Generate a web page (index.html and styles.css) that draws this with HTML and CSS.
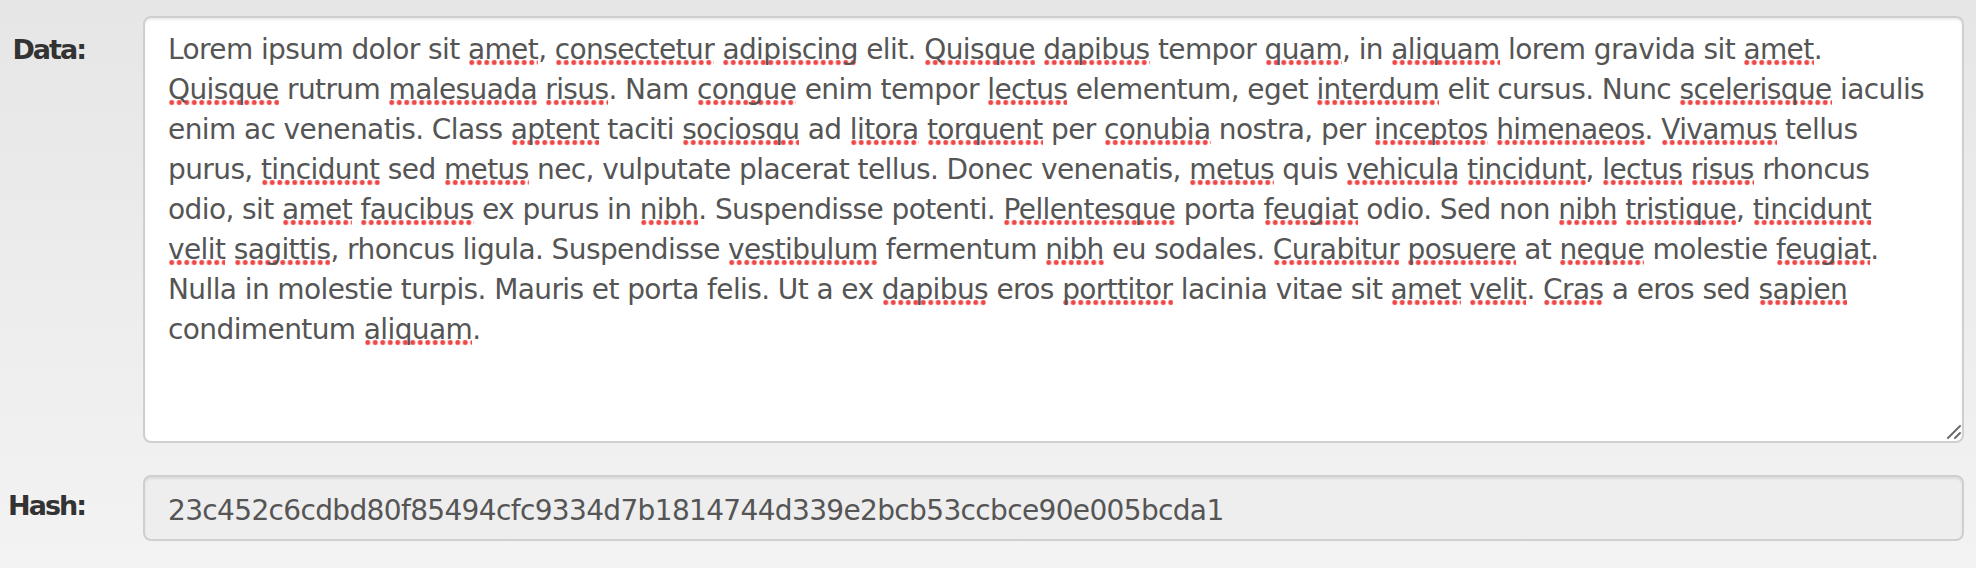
FILE: index.html
```html
<!DOCTYPE html>
<html lang="la">
<head>
<meta charset="utf-8">
<title>Hash</title>
<link rel="stylesheet" href="styles.css">
</head>
<body>
<form class="form">
  <div class="row row-data">
    <label class="label label-data">Data:</label>
    <div class="textarea">
      <div class="text">Lorem ipsum dolor sit <span class="sp">amet</span>, <span class="sp">consectetur</span> <span class="sp">adipiscing</span> elit. <span class="sp">Quisque</span> <span class="sp">dapibus</span> tempor <span class="sp">quam</span>, in <span class="sp">aliquam</span> lorem gravida sit <span class="sp">amet</span>.<br><span class="sp">Quisque</span> rutrum <span class="sp">malesuada</span> <span class="sp">risus</span>. Nam <span class="sp">congue</span> enim tempor <span class="sp">lectus</span> elementum, eget <span class="sp">interdum</span> elit cursus. Nunc <span class="sp">scelerisque</span> iaculis<br>enim ac venenatis. Class <span class="sp">aptent</span> taciti <span class="sp">sociosqu</span> ad <span class="sp">litora</span> <span class="sp">torquent</span> per <span class="sp">conubia</span> nostra, per <span class="sp">inceptos</span> <span class="sp">himenaeos</span>. <span class="sp">Vivamus</span> tellus<br>purus, <span class="sp">tincidunt</span> sed <span class="sp">metus</span> nec, vulputate placerat tellus. Donec venenatis, <span class="sp">metus</span> quis <span class="sp">vehicula</span> <span class="sp">tincidunt</span>, <span class="sp">lectus</span> <span class="sp">risus</span> rhoncus<br>odio, sit <span class="sp">amet</span> <span class="sp">faucibus</span> ex purus in <span class="sp">nibh</span>. Suspendisse potenti. <span class="sp">Pellentesque</span> porta <span class="sp">feugiat</span> odio. Sed non <span class="sp">nibh</span> <span class="sp">tristique</span>, <span class="sp">tincidunt</span><br><span class="sp">velit</span> <span class="sp">sagittis</span>, rhoncus ligula. Suspendisse <span class="sp">vestibulum</span> fermentum <span class="sp">nibh</span> eu sodales. <span class="sp">Curabitur</span> <span class="sp">posuere</span> at <span class="sp">neque</span> molestie <span class="sp">feugiat</span>.<br>Nulla in molestie turpis. Mauris et porta felis. Ut a ex <span class="sp">dapibus</span> eros <span class="sp">porttitor</span> lacinia vitae sit <span class="sp">amet</span> <span class="sp">velit</span>. <span class="sp">Cras</span> a eros sed <span class="sp">sapien</span><br>condimentum <span class="sp">aliquam</span>.</div>
      <svg class="grip" width="16" height="16" viewBox="0 0 16 16" aria-hidden="true">
        <line x1="15" y1="2" x2="3" y2="14" stroke="#6a6a6a" stroke-width="2" stroke-linecap="round"/>
        <line x1="15" y1="9" x2="10" y2="14" stroke="#6a6a6a" stroke-width="2" stroke-linecap="round"/>
      </svg>
    </div>
  </div>
  <div class="row row-hash">
    <label class="label label-hash">Hash:</label>
    <div class="hash">23c452c6cdbd80f85494cfc9334d7b1814744d339e2bcb53ccbce90e005bcda1</div>
  </div>
</form>
</body>
</html>
```
FILE: styles.css
```css
html, body {
  margin: 0;
  height: 100%;
}
body {
  background: linear-gradient(to bottom, #e6e6e6 0%, #f3f3f3 100%);
  font-family: "DejaVu Sans", "Liberation Sans", sans-serif;
  color: #555;
}
.form {
  display: flex;
  flex-direction: column;
  gap: 32px;
  padding: 16px 12px 0 0;
}
.row {
  display: grid;
  grid-template-columns: 85px minmax(0, 1fr);
  column-gap: 58px;
  align-items: start;
}
.label {
  font-family: "DejaVu Sans", sans-serif;
  font-weight: bold;
  font-size: 27px;
  letter-spacing: -2px;
  line-height: 40px;
  color: #333;
  text-align: right;
}
.label-data { padding-top: 14px; }
.label-hash { padding-top: 11px; }

.textarea {
  position: relative;
  box-sizing: border-box;
  height: 427px;
  min-width: 0;
  overflow: hidden;
  background: #fff;
  border: 2px solid #cfcfcf;
  border-radius: 8px;
  box-shadow: inset 0 2px 2px rgba(0, 0, 0, 0.075);
  padding: 12px 23px;
}
.text {
  font-size: 28px;
  line-height: 40px;
  letter-spacing: -0.6px;
  white-space: nowrap;
  color: #555;
}
.sp {
  background-image: radial-gradient(circle at center, #f04848 0, #f04848 1.9px, rgba(240, 72, 72, 0.5) 2.5px, rgba(240, 72, 72, 0) 2.9px);
  background-size: 7.5px 6.6px;
  background-repeat: repeat-x;
  background-position: 0 100%;
}
.grip {
  position: absolute;
  right: 1px;
  bottom: 1px;
}
.hash {
  box-sizing: border-box;
  height: 66px;
  min-width: 0;
  background: #eeeeee;
  border: 2px solid #cfcfcf;
  border-radius: 8px;
  box-shadow: inset 0 2px 2px rgba(0, 0, 0, 0.075);
  padding: 14px 23px 8px;
  font-size: 28px;
  line-height: 40px;
  letter-spacing: -0.65px;
  color: #555;
  white-space: nowrap;
}
```
